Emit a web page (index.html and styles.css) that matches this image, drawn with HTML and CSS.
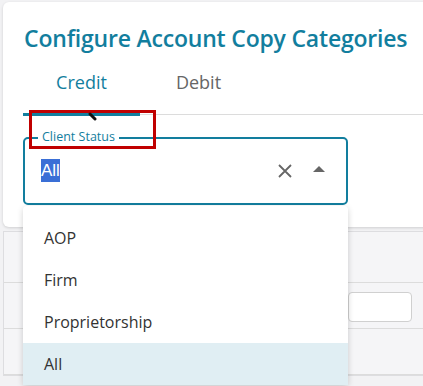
FILE: index.html
```html
<!DOCTYPE html>
<html>

<head>
    <title>Configure Account Copy Categories</title>
    <link rel="stylesheet" href="styles.css">
</head>

<body>
    <div class="card">
        <h1>Configure Account Copy Categories</h1>

        <div class="tabs">
            <div class="tab active">Credit</div>
            <div class="tab">Debit</div>
        </div>

        <div class="field">
            <span class="field-label">Client Status</span>
            <span class="field-value"><span class="selected">All</span></span>
            <span class="field-clear">
                <svg width="16" height="16" viewBox="0 0 16 16">
                    <path d="M2 2 L14 14 M14 2 L2 14" stroke="#666" stroke-width="1.8" fill="none" />
                </svg>
            </span>
            <span class="field-arrow">
                <svg width="12" height="8" viewBox="0 0 12 8">
                    <path d="M0 6 L6 0 L12 6 Z" fill="#666" />
                </svg>
            </span>
        </div>
    </div>

    <div class="grid">
        <div class="grid-head"></div>
        <div class="grid-row">
            <div class="grid-input"></div>
        </div>
        <div class="grid-row"></div>
    </div>

    <!-- open dropdown menu -->
    <ul class="menu">
        <li>AOP</li>
        <li>Firm</li>
        <li>Proprietorship</li>
        <li class="current">All</li>
    </ul>

    <!-- annotation overlay -->
    <div class="highlight-box"></div>
    <svg class="cursor-mark" width="10" height="10" viewBox="0 0 10 10">
        <path d="M2 2 L7 7" stroke="#111" stroke-width="3" stroke-linecap="round" />
    </svg>
</body>

</html>
```

FILE: styles.css
```css
body {
    margin: 0;
    background-color: #f2f2f4;
    font-family: "Open Sans", sans-serif;
    position: relative;
    overflow: hidden;
    height: 386px;
}

.card {
    margin: 2px 0 0 3px;
    width: 440px;
    height: 225px;
    background: white;
    border-radius: 6px;
    box-shadow: 0 1px 3px rgba(0, 0, 0, 0.15);
    overflow: hidden;
}

h1 {
    margin: 0;
    padding: 19px 0 0 21px;
    font-size: 23px;
    font-weight: 600;
    color: #127e9e;
    letter-spacing: -0.2px;
    line-height: 34px;
}

.tabs {
    display: flex;
    margin: 15px 0 0 20px;
    border-bottom: 1px solid #dcdcdc;
}

.tab {
    width: 117px;
    text-align: center;
    font-size: 18px;
    color: #666;
    line-height: 24px;
    padding-bottom: 19px;
}

.tab.active {
    color: #127e9e;
    border-bottom: 3px solid #127e9e;
    margin-bottom: -2px;
}

.field {
    position: relative;
    display: flex;
    align-items: center;
    margin: 22px 0 0 20px;
    width: 321px;
    height: 64px;
    border: 2px solid #127e9e;
    border-radius: 5px;
}

.field-label {
    position: absolute;
    top: -10px;
    left: 13px;
    padding: 0 4px;
    background: white;
    font-size: 12.5px;
    line-height: 16px;
    color: #127e9e;
}

.field-value {
    flex: 1;
    padding-left: 16px;
    font-family: "Liberation Sans", Arial, sans-serif;
    font-size: 17px;
}

.selected {
    background: #3a6fd6;
    color: white;
    padding: 2px 0;
}

.field-clear {
    display: flex;
    margin-right: 20px;
}

.field-arrow {
    display: flex;
    margin-right: 21px;
    margin-bottom: 3px;
}

.grid {
    margin: 4px 0 0 3px;
    width: 440px;
    border: 1px solid #dddde0;
    background: #f5f5f7;
}

.grid-head {
    height: 50px;
    border-bottom: 1px solid #dcdcdc;
}

.grid-row {
    height: 46px;
    padding: 9px 0 0 344px;
    box-sizing: border-box;
    border-bottom: 1px solid #dcdcdc;
}

.grid-input {
    width: 62px;
    height: 28px;
    background: white;
    border: 1px solid #d0d0d0;
    border-radius: 4px;
}

.menu {
    position: absolute;
    left: 23px;
    top: 206px;
    width: 325px;
    margin: 0;
    padding: 11px 0 0;
    list-style: none;
    background: white;
    box-shadow: 0 2px 6px rgba(0, 0, 0, 0.18);
    border-radius: 4px;
}

.menu li {
    height: 42px;
    line-height: 42px;
    padding-left: 21px;
    font-size: 16px;
    color: #333;
}

.menu li.current {
    background: #e0eef3;
}

.highlight-box {
    position: absolute;
    left: 29px;
    top: 110px;
    width: 121px;
    height: 33px;
    border: 3px solid #c00000;
}

.cursor-mark {
    position: absolute;
    left: 88px;
    top: 112px;
}
```
